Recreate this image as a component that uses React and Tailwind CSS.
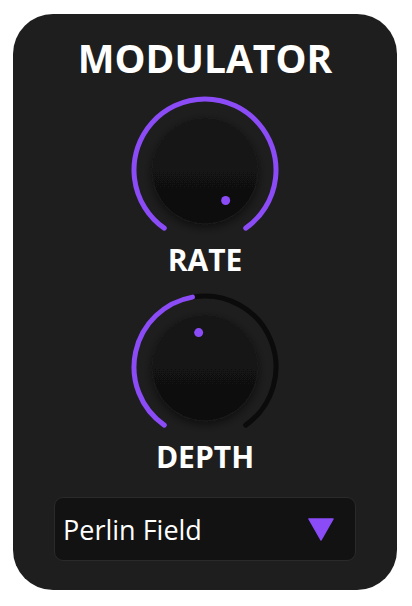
import React from "react";

const PURPLE = "#8b4cf7";

const polar = (cx, cy, r, deg) => {
  const a = (deg * Math.PI) / 180;
  return [cx + r * Math.sin(a), cy - r * Math.cos(a)];
};

const arcPath = (cx, cy, r, from, to) => {
  const [x1, y1] = polar(cx, cy, r, from);
  const [x2, y2] = polar(cx, cy, r, to);
  const large = to - from > 180 ? 1 : 0;
  return `M ${x1} ${y1} A ${r} ${r} 0 ${large} 1 ${x2} ${y2}`;
};

const Knob = ({ id, value }) => {
  const min = -145;
  const max = 145;
  const angle = min + (max - min) * value;
  const [dx, dy] = polar(75, 75, 36, angle);

  return (
    <svg width="150" height="140" viewBox="0 0 150 140" className="block">
      <defs>
        <linearGradient id={`body-${id}`} x1="0" y1="0" x2="0" y2="1">
          <stop offset="0%" stopColor="#151515" />
          <stop offset="100%" stopColor="#0f0f0f" />
        </linearGradient>
        <filter id={`shadow-${id}`} x="-30%" y="-30%" width="160%" height="160%">
          <feDropShadow dx="0" dy="3" stdDeviation="5" floodColor="#000" floodOpacity="0.55" />
        </filter>
      </defs>
      {value < 1 && (
        <path d={arcPath(75, 75, 71, angle, max)} fill="none" stroke="#0b0b0b" strokeWidth="5" strokeLinecap="round" />
      )}
      <path d={arcPath(75, 75, 71, min, angle)} fill="none" stroke={PURPLE} strokeWidth="5" strokeLinecap="round" />
      <circle cx="75" cy="76" r="53" fill={`url(#body-${id})`} stroke="#1b1b1b" strokeWidth="1" filter={`url(#shadow-${id})`} />
      <circle cx={dx} cy={dy + 1} r="4.5" fill={PURPLE} />
    </svg>
  );
};

export default function App() {
  return (
    <div className="min-h-screen bg-white pt-[14px] pl-[13px]" style={{ fontFamily: '"Open Sans", "Noto Sans", sans-serif' }}>
      <div className="w-[384px] h-[576px] rounded-[40px] bg-[#1e1e1e] flex flex-col items-center pt-[24px]">
        <h1 className="text-[39px] leading-none font-bold text-white">MODULATOR</h1>

        <div className="mt-[18px]">
          <Knob id="rate" value={1} />
        </div>
        <div className="mt-[10px] text-[30px] leading-none font-bold text-white">RATE</div>

        <div className="mt-[17px]">
          <Knob id="depth" value={0.465} />
        </div>
        <div className="mt-[10px] text-[30px] leading-none font-bold text-white">DEPTH</div>

        <button className="mt-[25px] w-[302px] h-[64px] rounded-[9px] bg-[#121212] border border-[#2a2a2a] flex items-center justify-between pl-[8px] pr-[21px]">
          <span className="text-[27px] leading-none text-white">Perlin Field</span>
          <svg width="26" height="23" viewBox="0 0 26 23">
            <path d="M1 1 L25 1 L13 22 Z" fill={PURPLE} stroke={PURPLE} strokeWidth="1.5" strokeLinejoin="round" />
          </svg>
        </button>
      </div>
    </div>
  );
}
